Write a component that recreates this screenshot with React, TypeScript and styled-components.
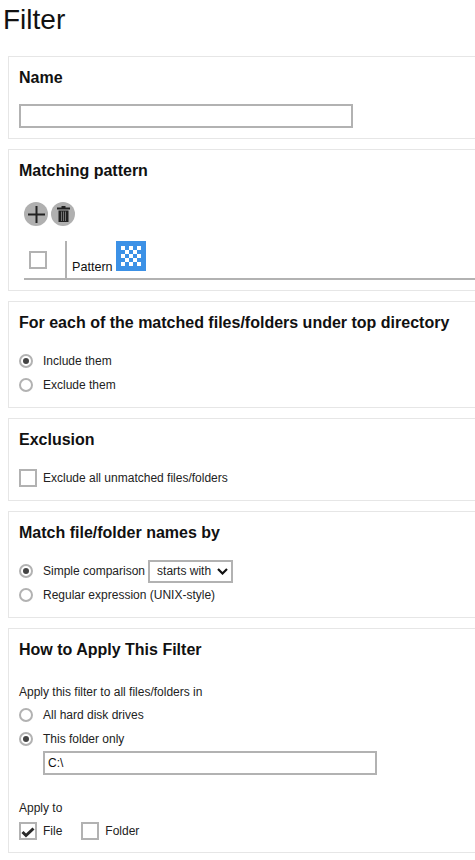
import React from "react";
import styled, { createGlobalStyle } from "styled-components";

const Global = createGlobalStyle`
  html, body { margin: 0; padding: 0; background: #fff; }
  body { font-family: "Liberation Sans", Arial, sans-serif; color: #111; overflow: hidden; }
`;

const Page = styled.div`
  width: 475px;
  height: 860px;
  overflow: hidden;
`;

const Title = styled.h1`
  margin: 0;
  padding-left: 3px;
  height: 56px;
  font-size: 28px;
  font-weight: 400;
  line-height: 40px;
`;

const Panel = styled.section<{ $h: number }>`
  box-sizing: border-box;
  width: 520px;
  height: ${(p) => p.$h}px;
  margin: 0 0 10px 8px;
  padding: 11px 10px 0;
  border: 1px solid #e6e6e6;
`;

const Heading = styled.h2<{ $mb?: number }>`
  margin: 0 0 ${(p) => p.$mb ?? 16}px;
  font-size: 16px;
  font-weight: 700;
  line-height: 20px;
`;

const TextBox = styled.input<{ $w: number; $ml?: number }>`
  display: block;
  box-sizing: border-box;
  width: ${(p) => p.$w}px;
  height: 24px;
  margin: 0 0 0 ${(p) => p.$ml ?? 0}px;
  padding: 0 3px;
  border: 2px solid #b2b2b2;
  outline: none;
  font: 12px "Liberation Sans", Arial, sans-serif;
  color: #111;
`;

const IconRow = styled.div`
  display: flex;
  gap: 3px;
  margin: 0 0 15px 5px;
`;

const RoundButton = styled.button`
  width: 24px;
  height: 24px;
  padding: 0;
  border: none;
  border-radius: 50%;
  background: #b0b0b0;
  display: flex;
  align-items: center;
  justify-content: center;
`;

const TableHead = styled.div`
  display: flex;
  height: 37px;
  margin-left: 5px;
  border-bottom: 2px solid #b2b2b2;
`;

const CheckCell = styled.div`
  box-sizing: border-box;
  flex: 0 0 43px;
  margin-right: 5px;
  padding: 10px 0 0 5px;
  border-right: 2px solid #b2b2b2;
`;

const PatternCell = styled.div`
  display: flex;
  align-items: flex-start;
  gap: 3px;
  font-size: 12.6px;
`;

const PatternLabel = styled.span`
  margin-top: 19px;
  line-height: 14px;
`;

const Box = styled.span`
  display: inline-flex;
  align-items: center;
  justify-content: center;
  box-sizing: border-box;
  flex: none;
  width: 18px;
  height: 18px;
  border: 2px solid #b2b2b2;
  background: #fff;
`;

const Option = styled.label<{ $h?: number }>`
  display: flex;
  align-items: center;
  height: ${(p) => p.$h ?? 24}px;
  font-size: 12px;
  line-height: 14px;
  color: #222;
`;

const Radio = styled.span<{ $on?: boolean }>`
  box-sizing: border-box;
  flex: none;
  width: 14px;
  height: 14px;
  margin-right: 10px;
  border: 2px solid #b2b2b2;
  border-radius: 50%;
  display: flex;
  align-items: center;
  justify-content: center;
  &::after {
    content: "";
    display: ${(p) => (p.$on ? "block" : "none")};
    width: 6px;
    height: 6px;
    border-radius: 50%;
    background: #444;
  }
`;

const BoxLabel = styled.span`
  margin: 0 19px 0 6px;
`;

const Picker = styled.span`
  box-sizing: border-box;
  display: inline-flex;
  align-items: center;
  justify-content: space-between;
  width: 85px;
  height: 23px;
  margin-left: 3px;
  padding: 0 3px 0 7px;
  border: 2px solid #b2b2b2;
  font-size: 12px;
`;

const Caption = styled.div<{ $mt?: number; $mb: number }>`
  margin: ${(p) => p.$mt ?? 0}px 0 ${(p) => p.$mb}px;
  height: 18px;
  font-size: 12px;
  line-height: 18px;
  color: #222;
`;

const Plus = () => (
  <svg width="17" height="17" viewBox="0 0 17 17" aria-hidden>
    <path d="M8.500 0v17M0 8.500h17" stroke="#222" strokeWidth="2" fill="none" />
  </svg>
);

const Trash = () => (
  <svg width="13" height="16" viewBox="0 0 13 16" aria-hidden>
    <path d="M4.500 0h4v1.500h4.500v2H0v-2h4.500z" fill="#222" />
    <path d="M1.500 4.500h10V16h-10z" fill="#222" />
    <path d="M4.500 5.500V15M6.500 5.500V15M8.500 5.500V15" stroke="#8a8a8a" strokeWidth="0.8" />
  </svg>
);

const Checker = () => (
  <svg width="30" height="30" viewBox="0 0 30 30" aria-hidden>
    <rect width="30" height="30" fill="#3c91e6" />
    {[0, 1, 2, 3, 4].flatMap((r) =>
      [0, 1, 2, 3, 4].map((c) => (
        <rect
          key={`${r}-${c}`}
          x={5 + c * 4}
          y={5 + r * 4}
          width="4"
          height="4"
          fill={(r + c) % 2 === 0 ? "#fff" : "#3c91e6"}
        />
      ))
    )}
  </svg>
);

const Tick = () => (
  <svg width="14" height="14" viewBox="0 0 14 14" aria-hidden>
    <path d="M1.500 8l3.500 3.500 7.500-7" stroke="#2a2a2a" strokeWidth="3" fill="none" />
  </svg>
);

const Chevron = () => (
  <svg width="11" height="7" viewBox="0 0 11 7" aria-hidden>
    <path d="M1 1l4.500 4.500L10 1" stroke="#111" strokeWidth="2.200" fill="none" />
  </svg>
);

export default function App() {
  return (
    <Page>
      <Global />
      <Title>Filter</Title>

      <Panel $h={83}>
        <Heading>Name</Heading>
        <TextBox $w={334} readOnly />
      </Panel>

      <Panel $h={142}>
        <Heading $mb={21}>Matching pattern</Heading>
        <IconRow>
          <RoundButton aria-label="Add"><Plus /></RoundButton>
          <RoundButton aria-label="Delete"><Trash /></RoundButton>
        </IconRow>
        <TableHead>
          <CheckCell><Box /></CheckCell>
          <PatternCell>
            <PatternLabel>Pattern</PatternLabel>
            <Checker />
          </PatternCell>
        </TableHead>
      </Panel>

      <Panel $h={107}>
        <Heading>For each of the matched files/folders under top directory</Heading>
        <Option><Radio $on />Include them</Option>
        <Option><Radio />Exclude them</Option>
      </Panel>

      <Panel $h={83}>
        <Heading>Exclusion</Heading>
        <Option><Box /><BoxLabel>Exclude all unmatched files/folders</BoxLabel></Option>
      </Panel>

      <Panel $h={107}>
        <Heading>Match file/folder names by</Heading>
        <Option><Radio $on />Simple comparison<Picker>starts with <Chevron /></Picker></Option>
        <Option><Radio />Regular expression (UNIX-style)</Option>
      </Panel>

      <Panel $h={225}>
        <Heading $mb={23}>How to Apply This Filter</Heading>
        <Caption $mb={2}>Apply this filter to all files/folders in</Caption>
        <Option><Radio />All hard disk drives</Option>
        <Option><Radio $on />This folder only</Option>
        <TextBox $w={334} $ml={24} value="C:\" readOnly />
        <Caption $mt={24} $mb={1}>Apply to</Caption>
        <Option $h={26}>
          <Box><Tick /></Box><BoxLabel>File</BoxLabel>
          <Box /><BoxLabel>Folder</BoxLabel>
        </Option>
      </Panel>
    </Page>
  );
}
